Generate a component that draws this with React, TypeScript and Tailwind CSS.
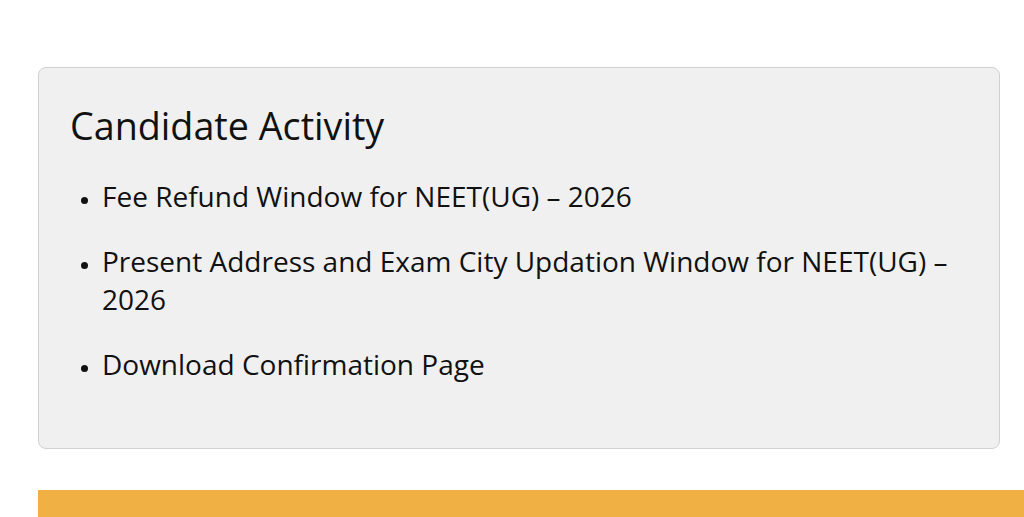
export default function App() {
  const items = [
    "Fee Refund Window for NEET(UG) – 2026",
    "Present Address and Exam City Updation Window for NEET(UG) – 2026",
    "Download Confirmation Page",
  ];

  return (
    <div className="min-h-[517px] bg-white pt-[67px] font-['Open_Sans',sans-serif] text-[#111]">
      <div className="ml-[38px] mr-[24px] rounded-lg border border-[#d0d0d0] bg-[#f0f0f0] px-[31px] pb-[38px] pt-[30px]">
        <h2 className="text-[37.7px] leading-[56px]">Candidate Activity</h2>
        <ul className="mt-[23px] list-disc pl-[32px]">
          {items.map((item) => (
            <li key={item} className="mb-[27px] text-[28px] leading-[38px] marker:text-[21px]">
              <a href="#" className="text-[#111]">
                {item}
              </a>
            </li>
          ))}
        </ul>
      </div>
      <div className="ml-[38px] mt-[41px] h-[28px] bg-[#f0b044]" />
    </div>
  );
}
